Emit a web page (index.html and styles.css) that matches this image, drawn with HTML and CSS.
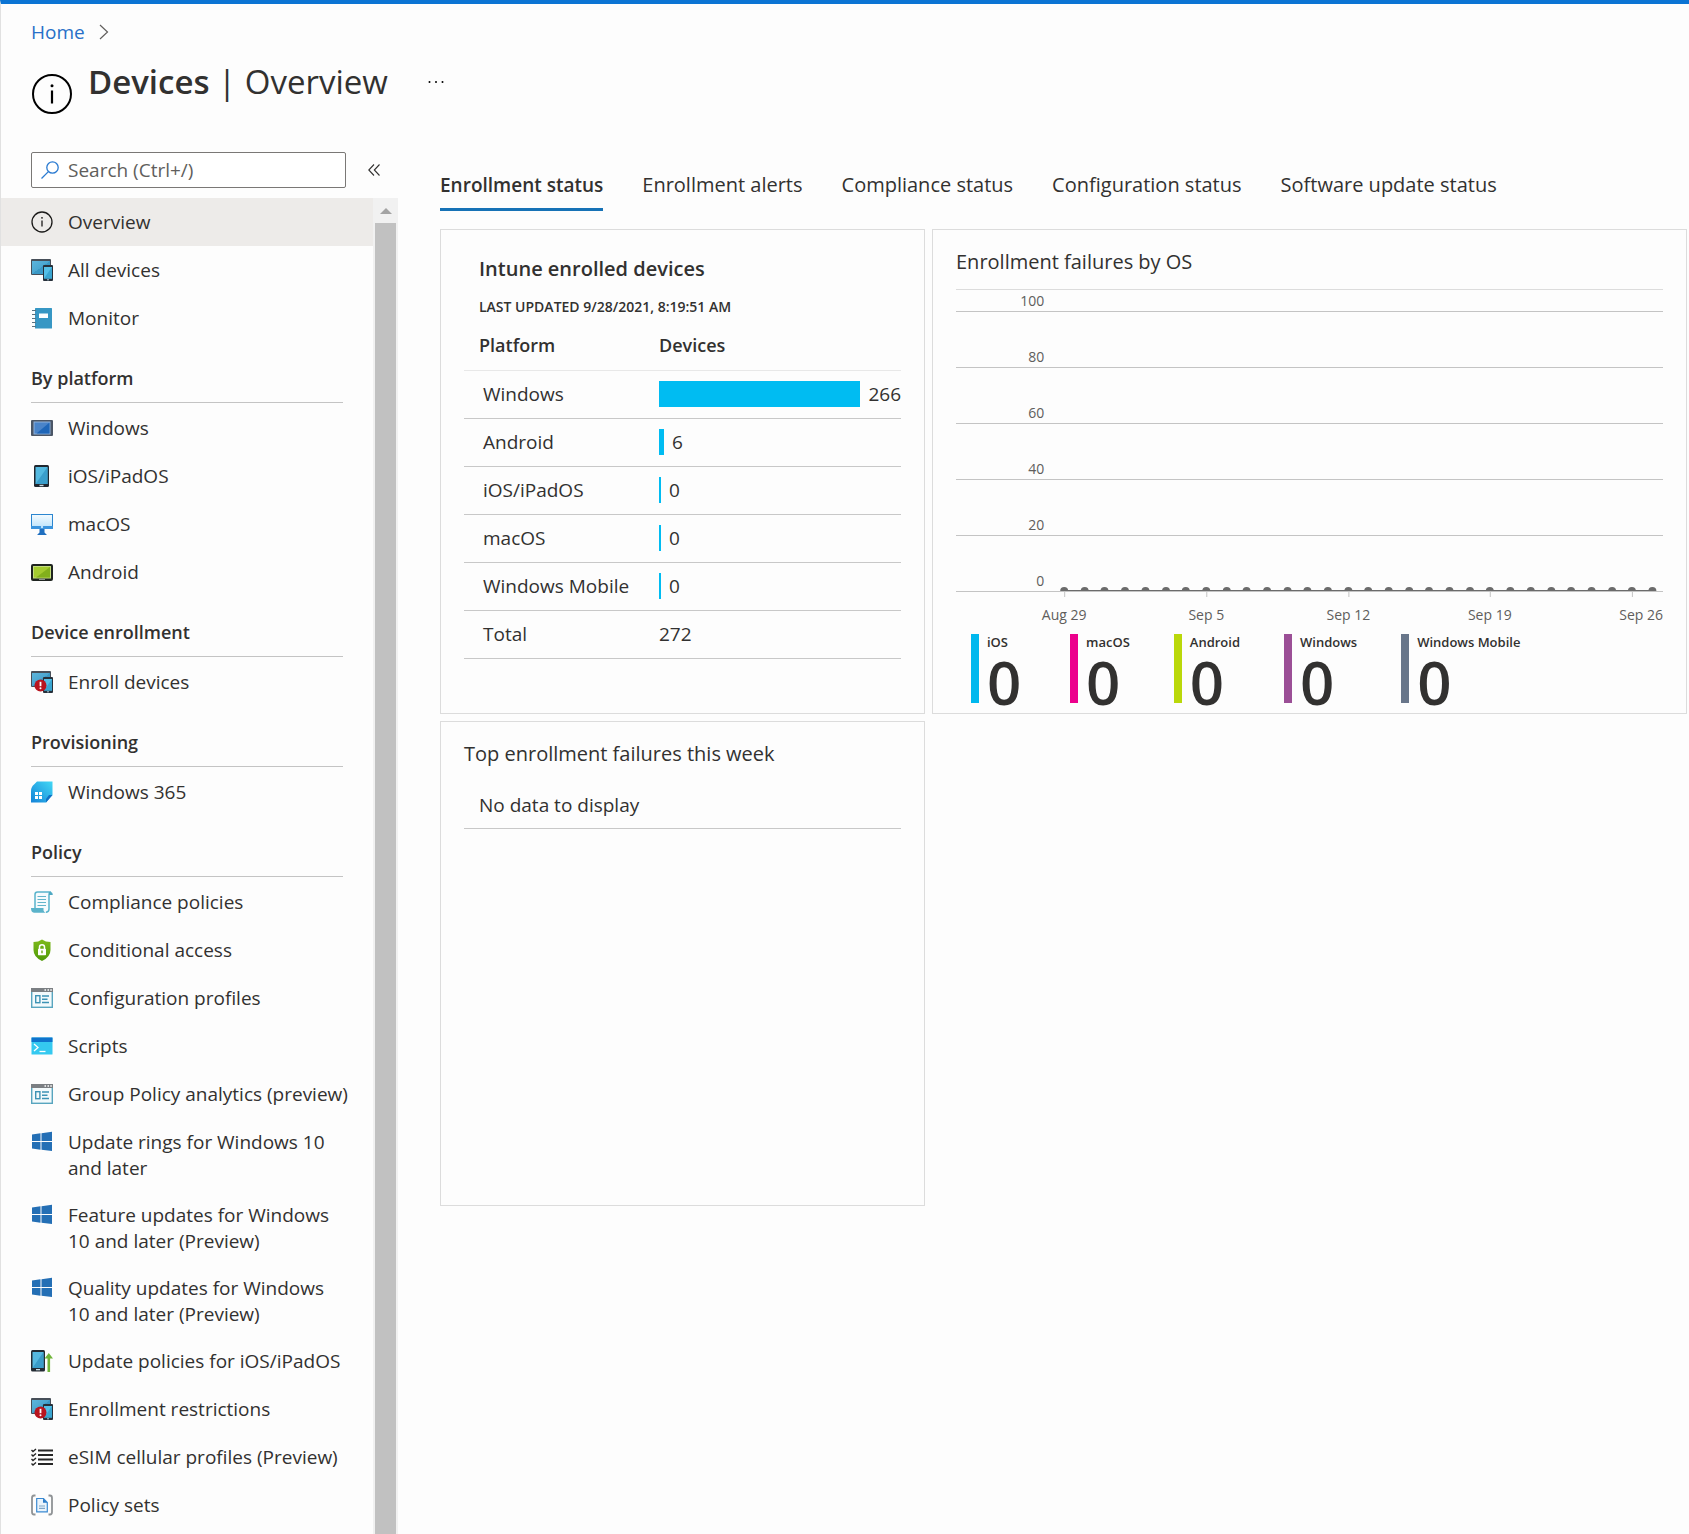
FILE: index.html
```html
<!DOCTYPE html>
<html lang="en">
<head>
<meta charset="utf-8">
<meta name="viewport" content="width=device-width, initial-scale=1">
<title>Devices | Overview</title>
<link rel="stylesheet" href="styles.css">
</head>
<body>
<svg class="sprite" aria-hidden="true">
  <defs>
    <linearGradient id="g-blue" x1="0" y1="0" x2="1" y2="1"><stop offset="0" stop-color="#5db5dc"/><stop offset="0.5" stop-color="#4ba6d0"/><stop offset="0.5" stop-color="#3a98c5"/><stop offset="1" stop-color="#3a98c5"/></linearGradient>
    <linearGradient id="g-mac" x1="0" y1="0" x2="0" y2="1"><stop offset="0" stop-color="#f4fbff"/><stop offset="1" stop-color="#b9e2fb"/></linearGradient>
    <linearGradient id="g-365" x1="1" y1="0" x2="0" y2="1"><stop offset="0" stop-color="#42d8f5"/><stop offset="1" stop-color="#1483d8"/></linearGradient>
    <linearGradient id="g-shield" x1="0" y1="0" x2="0" y2="1"><stop offset="0" stop-color="#7fba1c"/><stop offset="1" stop-color="#4f9a08"/></linearGradient>
  </defs>
  <symbol id="i-info" viewBox="0 0 22 22"><circle cx="11" cy="11" r="10" fill="none" stroke="#1b1a19" stroke-width="1.3"/><path d="M11 9.5v6" stroke="#1b1a19" stroke-width="1.3"/><circle cx="11" cy="6.8" r="0.9" fill="#1b1a19"/></symbol>
  <symbol id="i-devices" viewBox="0 0 22 22"><rect width="20" height="16" rx="1" fill="#474f59"/><rect x="1" y="2" width="18" height="13" fill="url(#g-blue)"/><rect x="12" y="6" width="10" height="16" rx="1" fill="#27303a"/><rect x="13" y="8" width="8" height="11.500" fill="#55bfe6"/><path d="M21 8v11.500h-8z" fill="#3aa5d0"/><rect x="16" y="20.300" width="2" height="1" fill="#a5c8d8"/></symbol>
  <symbol id="i-notebook" viewBox="0 0 22 22"><rect x="4" y="1" width="17" height="20.500" rx="0.500" fill="#3797c4"/><rect x="8" y="6.500" width="9" height="4.500" fill="#fff"/><path d="M1 3.500h4M1 7.500h4M1 11.500h4M1 15.500h4M1 19.500h4" stroke="#5b7380" stroke-width="1.200"/></symbol>
  <symbol id="i-windows-device" viewBox="0 0 22 22"><rect y="3" width="22" height="16" rx="1" fill="#4b5666"/><rect x="2.500" y="4.500" width="17" height="13" fill="#8fb0d8"/><rect x="3.500" y="5.500" width="15" height="11" fill="#4a84c9"/><path d="M18.500 5.500v11h-13z" fill="#1f66b8"/></symbol>
  <symbol id="i-ipad" viewBox="0 0 22 22"><rect x="3" y="0" width="15" height="22" rx="1.500" fill="#20272f"/><rect x="4.500" y="2" width="12" height="17" fill="#54b9e0"/><path d="M16.500 2v17h-12z" fill="#3a9ecb"/><rect x="8.500" y="19.800" width="4" height="1.400" fill="#c9dbe4"/></symbol>
  <symbol id="i-mac" viewBox="0 0 22 22"><rect x="0.500" y="1.500" width="21" height="14" fill="url(#g-mac)" stroke="#2b86d0"/><path d="M0 13h22v3H0z" fill="#3a94de"/><path d="M8.500 16h5v3.500l2.500 2.500H6l2.500-2.500z" fill="#1f6fc0"/><circle cx="11" cy="14" r="1.200" fill="#bfe3fb"/></symbol>
  <symbol id="i-android" viewBox="0 0 22 22"><rect y="3" width="22" height="17" rx="2" fill="#1f2420"/><rect x="2" y="5" width="18" height="12.500" fill="#c3dd7c"/><rect x="3" y="6" width="16" height="10.500" fill="#a4cb2f"/><path d="M19 6v10.500H5z" fill="#82b01c"/><rect x="8" y="17.800" width="6" height="1.200" fill="#8d948c"/></symbol>
  <symbol id="i-enroll" viewBox="0 0 22 22"><use href="#i-devices"/><circle cx="9.500" cy="14.500" r="6" fill="#b8151f"/><path d="M9.500 10.800v4.400" stroke="#fff" stroke-width="1.800"/><circle cx="9.500" cy="17.300" r="1" fill="#fff"/></symbol>
  <symbol id="i-w365" viewBox="0 0 22 22"><path d="M6 0.500h15.500V14L15 21.500H0V10Q0 6 3 3.500z" fill="url(#g-365)"/><path d="M21.500 14L15 21.500V18l3-4z" fill="#1170c4"/><path d="M4 11h3v3H4zM8 11h3v3H8zM4 15h3v3H4zM8 15h3v3H8z" fill="#fff"/></symbol>
  <symbol id="i-scroll" viewBox="0 0 22 22"><path d="M4 17V3.500Q4 1 6.500 1H20q-2 0.500-2 3v14q0 3-3 3.300" fill="#f6fbfd" stroke="#59b4cc" stroke-width="1.500"/><path d="M18 1h2q1.800 0.300 1.800 3H18z" fill="#4fa9c3"/><path d="M0 17h12.500v2.500q0.500 2 2.500 2.200H3Q0 21.500 0 17z" fill="#5bb3ca"/><path d="M6.500 5.500h8.500M6.500 8.500h8.500M6.500 11.500h8.500M6.500 14.500h8.500" stroke="#63b5cb" stroke-width="1.200"/></symbol>
  <symbol id="i-shield" viewBox="0 0 22 22"><path d="M11 0.500Q14.500 3 19.500 3v8q0 7-8.500 11Q2.500 18 2.500 11V3Q7.500 3 11 0.500z" fill="url(#g-shield)"/><path d="M8.500 10V8q0-2.300 2.500-2.300T13.500 8v2" fill="none" stroke="#fff" stroke-width="1.500"/><rect x="7" y="9.700" width="8" height="6.500" rx="0.600" fill="#fff"/><path d="M11 11.500v2.800" stroke="#6aa918" stroke-width="1.400"/></symbol>
  <symbol id="i-profile" viewBox="0 0 22 22"><rect x="0.700" y="1.700" width="20.600" height="18.600" fill="#f3fafc" stroke="#58a5bf" stroke-width="1.400"/><path d="M0 1h22v4H0z" fill="#7b7f83"/><path d="M13.500 3h1.500M16.500 3h1.500M19.300 3h1.500" stroke="#fff" stroke-width="1.400"/><rect x="4.700" y="8.700" width="4.200" height="7" fill="none" stroke="#3d93b5" stroke-width="1.400"/><path d="M11 9h7M11 12.200h5.500M11 15.500h7" stroke="#3d93b5" stroke-width="1.400"/></symbol>
  <symbol id="i-script" viewBox="0 0 22 22"><rect x="0.500" y="2.500" width="21" height="17" rx="0.500" fill="#35c9f0"/><path d="M0.500 2.500h21V7h-21z" fill="#0f73cc"/><path d="M3 9l4 3.500L3 16" fill="none" stroke="#fff" stroke-width="1.300"/><path d="M8.500 16.500h6" stroke="#fff" stroke-width="1.300"/></symbol>
  <symbol id="i-win" viewBox="0 0 22 22"><path d="M1 3.500l8.500-1.200V10H1zM10.500 2.200L21 0.700V10H10.500zM1 11h8.500v7.800L1 17.600zM10.500 11H21v9L10.500 18.800z" fill="#246fb5"/></symbol>
  <symbol id="i-ios-update" viewBox="0 0 22 22"><rect width="14" height="21.500" rx="1.500" fill="#232b33"/><rect x="1.500" y="2" width="11" height="16" fill="#55b8df"/><path d="M12.500 2v16h-11z" fill="#3a9cc8"/><rect x="5" y="19" width="4" height="1.300" fill="#c9dbe4"/><path d="M17.800 3l4.200 5.500h-2.900V22h-2.600V8.500h-2.900z" fill="#70b53a"/></symbol>
  <symbol id="i-list" viewBox="0 0 22 22"><path d="M7 4.500h15M7 9h15M7 13.500h15M7 18h15" stroke="#262626" stroke-width="1.800"/><path d="M0.500 4l1.500 1.500L5 3M0.500 8.500l1.500 1.500L5 7.500M0.500 13l1.500 1.500L5 12M0.500 17.500l1.500 1.500L5 16.500" fill="none" stroke="#262626" stroke-width="1.400"/></symbol>
  <symbol id="i-sets" viewBox="0 0 22 22"><path d="M4.500 1.500H3Q1 1.500 1 4v14q0 2.500 2 2.500h1.500M17.500 1.500H19q2 0 2 2.500v14q0 2.500-2 2.500h-1.500" fill="none" stroke="#8f9396" stroke-width="1.800"/><path d="M5.700 4.500h6.800l3.800 4v9.300H5.700z" fill="#eaf4fc" stroke="#3b8ad2" stroke-width="1.200"/><path d="M12 4.500v4.300h4.300z" fill="#2b7cc9"/><path d="M8 12h6M8 14.300h6" stroke="#7fa5c6" stroke-width="1.200"/></symbol>
</svg>

<div class="page">
  <header class="header">
    <nav class="crumbs" aria-label="Breadcrumb">
      <a href="#">Home</a>
      <svg class="chevron" viewBox="0 0 10 16" aria-hidden="true"><path d="M1 1l7.500 7L1 15" fill="none" stroke="#605e5c" stroke-width="1.200"/></svg>
    </nav>
    <div class="title-row">
      <svg class="title-icon" viewBox="0 0 40 40" aria-hidden="true"><circle cx="20" cy="20" r="19" fill="none" stroke="#000" stroke-width="2"/><path d="M20 16.500v13" stroke="#000" stroke-width="2.200"/><circle cx="20" cy="11.800" r="1.500"/></svg>
      <h1><strong>Devices</strong> | Overview</h1>
      <button class="more" type="button" aria-label="More"><svg viewBox="0 0 16 4" aria-hidden="true"><circle cx="1.500" cy="2" r="1"/><circle cx="8" cy="2" r="1"/><circle cx="14.500" cy="2" r="1"/></svg></button>
    </div>
  </header>

  <div class="body">
    <aside class="sidebar">
      <div class="search-row">
        <div class="search">
          <svg viewBox="0 0 18 18" aria-hidden="true"><circle cx="11.500" cy="6.500" r="5.700" fill="none" stroke="#2b7bd1" stroke-width="1.300"/><path d="M7.400 10.600L0.500 17.500" stroke="#2b7bd1" stroke-width="1.300"/></svg>
          <input type="search" aria-label="Search" placeholder="Search (Ctrl+/)">
        </div>
        <button class="collapse" type="button" aria-label="Collapse menu"><svg viewBox="0 0 12 12" aria-hidden="true"><path d="M6 0.500L0.800 6 6 11.500M11.500 0.500L6.300 6l5.200 5.500" fill="none" stroke="#323130" stroke-width="1.100"/></svg></button>
      </div>
      <div class="menu-wrap">
        <nav class="menu" aria-label="Devices">
          <a class="item active" href="#"><svg><use href="#i-info"/></svg><span>Overview</span></a>
          <a class="item" href="#"><svg><use href="#i-devices"/></svg><span>All devices</span></a>
          <a class="item" href="#"><svg><use href="#i-notebook"/></svg><span>Monitor</span></a>
          <h2>By platform</h2>
          <a class="item" href="#"><svg><use href="#i-windows-device"/></svg><span>Windows</span></a>
          <a class="item" href="#"><svg><use href="#i-ipad"/></svg><span>iOS/iPadOS</span></a>
          <a class="item" href="#"><svg><use href="#i-mac"/></svg><span>macOS</span></a>
          <a class="item" href="#"><svg><use href="#i-android"/></svg><span>Android</span></a>
          <h2>Device enrollment</h2>
          <a class="item" href="#"><svg><use href="#i-enroll"/></svg><span>Enroll devices</span></a>
          <h2>Provisioning</h2>
          <a class="item" href="#"><svg><use href="#i-w365"/></svg><span>Windows 365</span></a>
          <h2>Policy</h2>
          <a class="item" href="#"><svg><use href="#i-scroll"/></svg><span>Compliance policies</span></a>
          <a class="item" href="#"><svg><use href="#i-shield"/></svg><span>Conditional access</span></a>
          <a class="item" href="#"><svg><use href="#i-profile"/></svg><span>Configuration profiles</span></a>
          <a class="item" href="#"><svg><use href="#i-script"/></svg><span>Scripts</span></a>
          <a class="item" href="#"><svg><use href="#i-profile"/></svg><span>Group Policy analytics (preview)</span></a>
          <a class="item" href="#"><svg><use href="#i-win"/></svg><span>Update rings for Windows 10 and later</span></a>
          <a class="item" href="#"><svg><use href="#i-win"/></svg><span>Feature updates for Windows 10 and later (Preview)</span></a>
          <a class="item" href="#"><svg><use href="#i-win"/></svg><span>Quality updates for Windows 10 and later (Preview)</span></a>
          <a class="item" href="#"><svg><use href="#i-ios-update"/></svg><span>Update policies for iOS/iPadOS</span></a>
          <a class="item" href="#"><svg><use href="#i-enroll"/></svg><span>Enrollment restrictions</span></a>
          <a class="item" href="#"><svg><use href="#i-list"/></svg><span>eSIM cellular profiles (Preview)</span></a>
          <a class="item" href="#"><svg><use href="#i-sets"/></svg><span>Policy sets</span></a>
        </nav>
        <div class="scrollbar" aria-hidden="true">
          <svg viewBox="0 0 12 6"><path d="M0 6l6-6 6 6z" fill="#a3a3a3"/></svg>
          <div class="thumb"></div>
        </div>
      </div>
    </aside>

    <main class="main">
      <div class="tabs" role="tablist">
        <button type="button" role="tab" aria-selected="true">Enrollment status</button>
        <button type="button" role="tab" aria-selected="false">Enrollment alerts</button>
        <button type="button" role="tab" aria-selected="false">Compliance status</button>
        <button type="button" role="tab" aria-selected="false">Configuration status</button>
        <button type="button" role="tab" aria-selected="false">Software update status</button>
      </div>
      <div class="cards">
        <section class="card enrolled">
          <h3>Intune enrolled devices</h3>
          <p class="updated">LAST UPDATED 9/28/2021, 8:19:51 AM</p>
          <table class="devices">
            <thead><tr><th scope="col">Platform</th><th scope="col">Devices</th></tr></thead>
            <tbody>
              <tr><td>Windows</td><td><div class="meter"><i style="width:202px"></i>266</div></td></tr>
              <tr><td>Android</td><td><div class="meter"><i style="width:5px"></i>6</div></td></tr>
              <tr><td>iOS/iPadOS</td><td><div class="meter"><i style="width:2px"></i>0</div></td></tr>
              <tr><td>macOS</td><td><div class="meter"><i style="width:2px"></i>0</div></td></tr>
              <tr><td>Windows Mobile</td><td><div class="meter"><i style="width:2px"></i>0</div></td></tr>
              <tr><td>Total</td><td>272</td></tr>
            </tbody>
          </table>
        </section>

        <section class="card failures">
          <h3>Enrollment failures by OS</h3>
          <svg class="chart" role="img" aria-label="Enrollment failures by OS, Aug 29 to Sep 26">
            <g class="grid">
              <rect y="21" width="100%" height="1"/><rect y="77" width="100%" height="1"/><rect y="133" width="100%" height="1"/>
              <rect y="189" width="100%" height="1"/><rect y="245" width="100%" height="1"/><rect y="301" width="100%" height="1"/>
              <rect x="15.3%" y="301" width="1" height="6"/><rect x="35.4%" y="301" width="1" height="6"/><rect x="55.5%" y="301" width="1" height="6"/><rect x="75.5%" y="301" width="1" height="6"/><rect x="95.6%" y="301" width="1" height="6"/>
            </g>
            <g class="y-labels">
              <text x="12.5%" y="16">100</text><text x="12.5%" y="72">80</text><text x="12.5%" y="128">60</text><text x="12.5%" y="184">40</text><text x="12.5%" y="240">20</text><text x="12.5%" y="296">0</text>
            </g>
            <svg class="series" x="0" y="290" width="100%" height="11">
              <rect x="15.3%" y="10" width="83.6%" height="1"/>
              <circle cx="15.3%" cy="11" r="4"/><circle cx="18.2%" cy="11" r="4"/><circle cx="21.0%" cy="11" r="4"/><circle cx="23.9%" cy="11" r="4"/><circle cx="26.8%" cy="11" r="4"/><circle cx="29.7%" cy="11" r="4"/><circle cx="32.5%" cy="11" r="4"/><circle cx="35.4%" cy="11" r="4"/><circle cx="38.3%" cy="11" r="4"/><circle cx="41.1%" cy="11" r="4"/><circle cx="44.0%" cy="11" r="4"/><circle cx="46.9%" cy="11" r="4"/><circle cx="49.7%" cy="11" r="4"/><circle cx="52.6%" cy="11" r="4"/><circle cx="55.5%" cy="11" r="4"/><circle cx="58.3%" cy="11" r="4"/><circle cx="61.2%" cy="11" r="4"/><circle cx="64.1%" cy="11" r="4"/><circle cx="66.9%" cy="11" r="4"/><circle cx="69.8%" cy="11" r="4"/><circle cx="72.7%" cy="11" r="4"/><circle cx="75.5%" cy="11" r="4"/><circle cx="78.4%" cy="11" r="4"/><circle cx="81.3%" cy="11" r="4"/><circle cx="84.2%" cy="11" r="4"/><circle cx="87.0%" cy="11" r="4"/><circle cx="89.9%" cy="11" r="4"/><circle cx="92.8%" cy="11" r="4"/><circle cx="95.6%" cy="11" r="4"/><circle cx="98.5%" cy="11" r="4"/>
            </svg>
            <g class="x-labels">
              <text x="15.3%" y="330">Aug 29</text><text x="35.4%" y="330">Sep 5</text><text x="55.5%" y="330">Sep 12</text><text x="75.5%" y="330">Sep 19</text><text class="last" x="100%" y="330">Sep 26</text>
            </g>
          </svg>
          <ul class="legend">
            <li class="ios"><span>iOS</span><b>0</b></li>
            <li class="macos"><span>macOS</span><b>0</b></li>
            <li class="android"><span>Android</span><b>0</b></li>
            <li class="windows"><span>Windows</span><b>0</b></li>
            <li class="mobile"><span>Windows Mobile</span><b>0</b></li>
          </ul>
        </section>

        <section class="card top">
          <h3>Top enrollment failures this week</h3>
          <p class="empty">No data to display</p>
        </section>
      </div>
    </main>
  </div>
</div>
</body>
</html>
```

FILE: styles.css
```css
* { box-sizing: border-box; }

body {
  margin: 0;
  background: #fdfdfd;
  color: #323130;
  font: 19px/26px "Segoe UI", "Open Sans", "Noto Sans", sans-serif;
}

h1, h2, h3, p, ul { margin: 0; padding: 0; font-weight: 400; }
button { border: 0; padding: 0; background: none; color: inherit; font: inherit; cursor: pointer; }
a { color: inherit; text-decoration: none; }
.sprite { position: absolute; width: 0; height: 0; }

.page {
  display: flex;
  flex-direction: column;
  min-height: 100vh;
  border-top: 4px solid #0b74d4;
  border-left: 1px solid #e1e1e1;
}

/* header */
.header { padding: 15px 30px 0; }
.crumbs { display: flex; align-items: center; gap: 14px; }
.crumbs a { color: #2870c8; }
.chevron { width: 10px; height: 16px; }
.title-row { display: flex; align-items: flex-start; padding-top: 13px; height: 107px; }
.title-icon { width: 40px; height: 40px; margin: 16px 16px 0 1px; }
h1 { font-size: 33px; line-height: 48px; }
h1 strong { font-weight: 600; }
.more { display: flex; margin: 22px 0 0 40px; }
.more svg { width: 16px; height: 4px; }

/* sidebar */
.body { display: flex; flex: 1; }
.sidebar { display: flex; flex-direction: column; width: 397px; flex: none; }
.search-row { display: flex; align-items: center; gap: 22px; padding: 0 0 10px 30px; }
.search {
  display: flex;
  align-items: center;
  gap: 9px;
  width: 315px;
  height: 36px;
  padding: 0 9px;
  border: 1px solid #7a7876;
  border-radius: 2px;
  background: #fff;
}
.search svg { width: 18px; height: 18px; flex: none; }
.search input { flex: 1; min-width: 0; border: 0; padding: 0; outline: 0; background: none; color: inherit; font: inherit; }
.search input::placeholder { color: #605e5c; opacity: 1; }
.collapse { display: flex; }
.collapse svg { width: 12px; height: 12px; }

.menu-wrap { display: flex; flex: 1; }
.menu { flex: 1; }
.item { display: flex; align-items: flex-start; gap: 15px; min-height: 48px; padding: 11px 23px 10px 30px; }
.item svg { width: 22px; height: 22px; margin-top: 2px; flex: none; }
.item.active { background: #edebe9; }
.menu h2 {
  height: 61px;
  margin: 0 30px 1px;
  padding-top: 23px;
  border-bottom: 1px solid #c4c4c4;
  font-size: 18px;
  font-weight: 600;
}
.scrollbar {
  display: flex;
  flex-direction: column;
  align-items: center;
  width: 25px;
  padding-top: 10px;
  background: #f1f1f1;
}
.scrollbar svg { width: 12px; height: 6px; margin-bottom: 9px; }
.thumb { flex: 1; width: 21px; background: #c1c1c1; }

/* tabs */
.main { flex: 1; min-width: 0; padding: 18px 2px 0 42px; }
.tabs { display: flex; gap: 39px; }
.tabs button { height: 41px; padding-bottom: 8px; border-bottom: 3px solid transparent; white-space: nowrap; font-size: 20px; }
.tabs [aria-selected="true"] { border-bottom-color: #1672b6; font-size: 19px; font-weight: 600; }

/* cards */
.cards { display: grid; grid-template-columns: 485px 1fr; gap: 7px; margin-top: 18px; }
.card { height: 485px; border: 1px solid #dcdcdc; padding: 19px 23px 0; }
.card h3 { font-size: 20px; }

.enrolled h3 { padding: 7px 0 0 15px; font-weight: 600; }
.updated { padding: 12px 0 0 15px; font-size: 14px; font-weight: 600; }
.devices { width: 100%; border-collapse: collapse; table-layout: fixed; }
.devices th { height: 50px; padding: 0; border-bottom: 1px solid #e8e8e8; text-align: left; font-size: 18px; font-weight: 600; }
.devices th:first-child { width: 195px; padding-left: 15px; }
.devices td { height: 48px; padding: 0; border-bottom: 1px solid #c8c8c8; }
.devices td:first-child { padding-left: 19px; }
.meter { display: flex; align-items: center; gap: 8px; }
.meter i { height: 26px; background: #00bcf2; }

.failures h3 { height: 40px; }
.chart { display: block; width: 100%; height: 342px; border-top: 1px solid #dcdcdc; }
.chart text { font-size: 14px; fill: #605e5c; }
.grid rect { fill: #c4c4c4; }
.y-labels text, .chart .last { text-anchor: end; }
.x-labels text { text-anchor: middle; }
.x-labels .last { text-anchor: end; }
.series { fill: #6b6b6b; }
.legend { display: flex; gap: 44px; padding: 3px 0 0 15px; list-style: none; }
.legend li { display: flex; flex-direction: column; min-width: 55px; height: 69px; padding-left: 8px; border-left: 8px solid; }
.legend span { font-size: 13px; line-height: 16px; font-weight: 600; }
.legend b { font-size: 60px; line-height: 64px; font-weight: 600; }
.legend .ios { border-color: #00b8ee; }
.legend .macos { border-color: #ec008c; }
.legend .android { border-color: #bad80a; }
.legend .windows { border-color: #9b4f96; }
.legend .mobile { border-color: #68768a; }

.empty { padding: 25px 15px 10px; border-bottom: 1px solid #c8c8c8; }
```
